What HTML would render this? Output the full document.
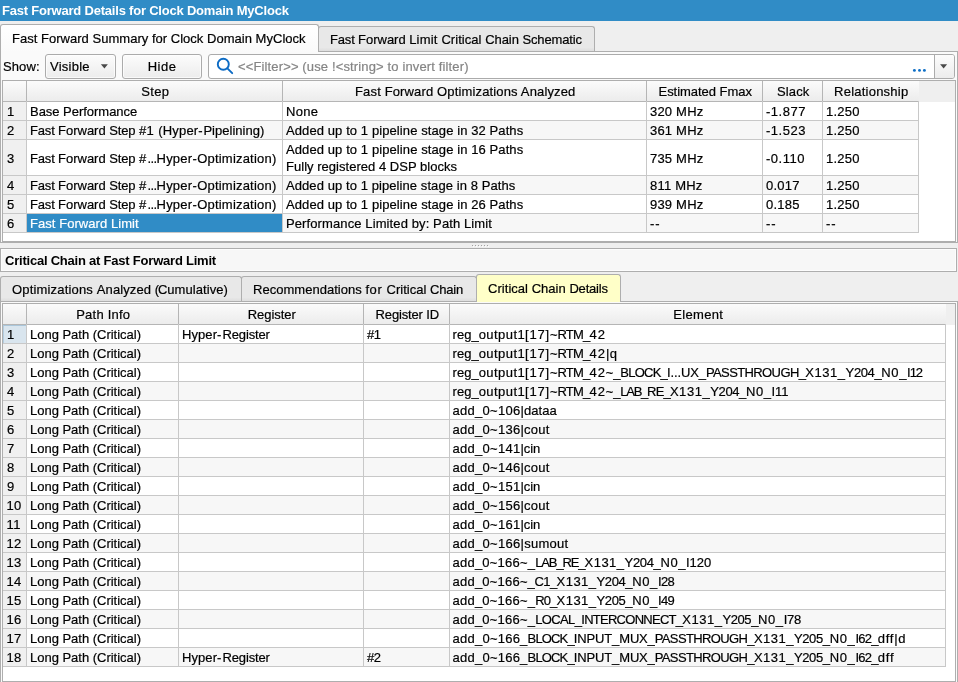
<!DOCTYPE html>
<html lang="en"><head><meta charset="utf-8"><title>Fast Forward Details for Clock Domain MyClock</title>
<style>
html,body{margin:0;padding:0}
body{width:958px;height:682px;overflow:hidden;background:#efefef;font-family:"Liberation Sans","DejaVu Sans",sans-serif;font-size:13px;color:#000;position:relative}
div,span{box-sizing:border-box}
#root{position:absolute;left:0;top:0;width:958px;height:682px;will-change:transform}
.a{position:absolute;white-space:nowrap;overflow:hidden}
.t{position:absolute;white-space:nowrap;line-height:16px;height:16px;-webkit-text-stroke:0.2px}
.c{text-align:center}
.hl{position:absolute;height:1px;background:#c8c8c8}
.vl{position:absolute;width:1px;background:#c8c8c8}
.hd{position:absolute;background:linear-gradient(#fbfbfb,#ececec)}
</style></head><body><div id="root">

<div class="a" style="left:0px;top:0px;width:958px;height:21px;background:#308cc6"></div>
<div class="t" style="left:2px;top:3px;letter-spacing:-0.211px;color:#fff;font-weight:bold;-webkit-text-stroke:0">Fast Forward Details for Clock Domain MyClock</div>
<div class="a" style="left:0px;top:51px;width:958px;height:192px;border:1px solid #aeaeae;background:#fafafa"></div>
<div class="a" style="left:318px;top:26px;width:277px;height:25px;border:1px solid #aeaeae;border-bottom:none;border-radius:3px 3px 0 0;background:linear-gradient(#e8e8e8 0,#e8e8e8 85%,#dedede 100%)"></div>
<div class="t" style="left:330px;top:32px;white-space:pre;"><span style="letter-spacing:-0.161px">Fast </span><span style="letter-spacing:-0.025px">Forward </span><span style="letter-spacing:0.19px">Limit </span><span style="letter-spacing:0.051px">Critical </span><span style="letter-spacing:-0.063px">Chain </span><span style="letter-spacing:-0.134px">Schematic</span></div>
<div class="a" style="left:0px;top:24px;width:319px;height:28px;border:1px solid #aeaeae;border-bottom:none;border-radius:3px 3px 0 0;background:linear-gradient(#fff,#fafafa)"></div>
<div class="t" style="left:12px;top:31px;letter-spacing:0.023px;">Fast Forward Summary for Clock Domain MyClock</div>
<div class="t" style="left:3px;top:59px;letter-spacing:0.1px;">Show:</div>
<div class="a" style="left:45px;top:54px;width:71px;height:25px;border:1px solid #ababab;border-radius:3px;background:linear-gradient(#fcfcfc,#ececec);box-shadow:inset 0 0 0 1px rgba(255,255,255,.7)"></div>
<div class="t" style="left:50px;top:59px;letter-spacing:0.25px;">Visible</div>
<svg class="a" style="left:100px;top:63px" width="10" height="7" viewBox="0 0 10 7"><path d="M0.9 1.25h7L4.4 5.4z" fill="#484848"/></svg>
<div class="a" style="left:122px;top:54px;width:80px;height:25px;border:1px solid #ababab;border-radius:3px;background:linear-gradient(#fcfcfc,#ececec);box-shadow:inset 0 0 0 1px rgba(255,255,255,.7)"></div>
<div class="t c" style="left:122px;top:59px;width:80px;padding-left:0px;letter-spacing:0.5px;">Hide</div>
<div class="a" style="left:208px;top:54px;width:747px;height:25px;border:1px solid #ababab;border-radius:3px;background:#fff"></div>
<svg class="a" style="left:213px;top:54px" width="24" height="24" viewBox="0 0 24 24"><circle cx="10.3" cy="10.3" r="5.5" fill="none" stroke="#0c6bc4" stroke-width="1.9"/><path d="M14.4 14.4L19.2 19.2" stroke="#0c6bc4" stroke-width="1.9" stroke-linecap="round"/></svg>
<div class="t" style="left:238px;top:59px;letter-spacing:0.137px;color:#858585">&lt;&lt;Filter&gt;&gt; (use !&lt;string&gt; to invert filter)</div>
<svg class="a" style="left:910px;top:66px" width="20" height="8" viewBox="0 0 20 8"><circle cx="4.4" cy="4.4" r="1.45" fill="#0f6fc6"/><circle cx="9.5" cy="4.4" r="1.45" fill="#0f6fc6"/><circle cx="14.4" cy="4.4" r="1.45" fill="#0f6fc6"/></svg>
<div class="a" style="left:934px;top:55px;width:20px;height:23px;border-left:1px solid #ababab;background:linear-gradient(#fcfcfc,#ececec);border-radius:0 2px 2px 0"></div>
<svg class="a" style="left:939px;top:63px" width="10" height="7" viewBox="0 0 10 7"><path d="M1.1 1.25h7L4.6 5.4z" fill="#484848"/></svg>
<div class="a" style="left:2px;top:80px;width:954px;height:162px;border:1px solid #aeaeae;background:#fff"></div>
<div class="a" style="left:3px;top:81px;width:916px;height:20px;background:linear-gradient(#fbfbfb,#ececec)"></div>
<div class="a" style="left:919px;top:81px;width:36px;height:21px;background:#efefef"></div>
<div class="t c" style="left:27px;top:84px;width:255px;padding-left:1.5px;letter-spacing:0.267px;">Step</div>
<div class="t c" style="left:283px;top:84px;width:363px;padding-left:1.5px;letter-spacing:0.147px;">Fast Forward Optimizations Analyzed</div>
<div class="t c" style="left:647px;top:84px;width:115px;padding-left:1.5px;letter-spacing:-0.031px;">Estimated Fmax</div>
<div class="t c" style="left:763px;top:84px;width:59px;padding-left:1.5px;letter-spacing:0.15px;">Slack</div>
<div class="t c" style="left:823px;top:84px;width:95px;padding-left:1.5px;letter-spacing:0.227px;">Relationship</div>
<div class="a" style="left:3px;top:102px;width:23px;height:18px;background:#f0f0f0"></div>
<div class="t" style="left:7px;top:104px;">1</div>
<div class="t" style="left:30px;top:104px;letter-spacing:-0.027px;">Base Performance</div>
<div class="t" style="left:286px;top:104px;letter-spacing:0.3px;">None</div>
<div class="t" style="left:650px;top:104px;letter-spacing:0.2px;">320 MHz</div>
<div class="t" style="left:766px;top:104px;letter-spacing:0.5px;">-1.877</div>
<div class="t" style="left:826px;top:104px;letter-spacing:0.25px;">1.250</div>
<div class="a" style="left:27px;top:121px;width:891px;height:18px;background:#f7f7f7"></div>
<div class="a" style="left:3px;top:121px;width:23px;height:18px;background:#f0f0f0"></div>
<div class="t" style="left:7px;top:123px;">2</div>
<div class="t" style="left:30px;top:123px;white-space:pre;"><span style="letter-spacing:-0.181px">Fast </span><span style="letter-spacing:0.0px">Forward </span><span style="letter-spacing:-0.152px">Step </span><span style="letter-spacing:0.466px">#</span><span style="letter-spacing:0.378px">1 </span><span style="letter-spacing:0.256px">(</span><span style="letter-spacing:0.163px">Hyper</span><span style="letter-spacing:0.756px">-</span><span style="letter-spacing:0.027px">Pipelining)</span></div>
<div class="t" style="left:286px;top:123px;letter-spacing:0.095px;">Added up to 1 pipeline stage in 32 Paths</div>
<div class="t" style="left:650px;top:123px;letter-spacing:0.2px;">361 MHz</div>
<div class="t" style="left:766px;top:123px;letter-spacing:0.5px;">-1.523</div>
<div class="t" style="left:826px;top:123px;letter-spacing:0.25px;">1.250</div>
<div class="a" style="left:3px;top:140px;width:23px;height:35px;background:#f0f0f0"></div>
<div class="t" style="left:7px;top:151px;">3</div>
<div class="t" style="left:30px;top:151px;white-space:pre;"><span style="letter-spacing:-0.181px">Fast </span><span style="letter-spacing:0.0px">Forward </span><span style="letter-spacing:-0.152px">Step </span><span style="letter-spacing:1.266px">#</span><span style="letter-spacing:-0.581px">...</span><span style="letter-spacing:0.243px">Hyper</span><span style="letter-spacing:0.456px">-</span><span style="letter-spacing:0.202px">Optimization)</span></div>
<div class="t" style="left:286px;top:142px;letter-spacing:0.095px;">Added up to 1 pipeline stage in 16 Paths</div>
<div class="t" style="left:286px;top:159px;letter-spacing:0.029px;">Fully registered 4 DSP blocks</div>
<div class="t" style="left:650px;top:151px;letter-spacing:0.2px;">735 MHz</div>
<div class="t" style="left:766px;top:151px;letter-spacing:0.5px;">-0.110</div>
<div class="t" style="left:826px;top:151px;letter-spacing:0.25px;">1.250</div>
<div class="a" style="left:27px;top:176px;width:891px;height:18px;background:#f7f7f7"></div>
<div class="a" style="left:3px;top:176px;width:23px;height:18px;background:#f0f0f0"></div>
<div class="t" style="left:7px;top:178px;">4</div>
<div class="t" style="left:30px;top:178px;white-space:pre;"><span style="letter-spacing:-0.181px">Fast </span><span style="letter-spacing:0.0px">Forward </span><span style="letter-spacing:-0.152px">Step </span><span style="letter-spacing:1.266px">#</span><span style="letter-spacing:-0.581px">...</span><span style="letter-spacing:0.243px">Hyper</span><span style="letter-spacing:0.456px">-</span><span style="letter-spacing:0.202px">Optimization)</span></div>
<div class="t" style="left:286px;top:178px;letter-spacing:0.079px;">Added up to 1 pipeline stage in 8 Paths</div>
<div class="t" style="left:650px;top:178px;letter-spacing:0.2px;">811 MHz</div>
<div class="t" style="left:766px;top:178px;letter-spacing:0.25px;">0.017</div>
<div class="t" style="left:826px;top:178px;letter-spacing:0.25px;">1.250</div>
<div class="a" style="left:3px;top:195px;width:23px;height:18px;background:#f0f0f0"></div>
<div class="t" style="left:7px;top:197px;">5</div>
<div class="t" style="left:30px;top:197px;white-space:pre;"><span style="letter-spacing:-0.181px">Fast </span><span style="letter-spacing:0.0px">Forward </span><span style="letter-spacing:-0.152px">Step </span><span style="letter-spacing:1.266px">#</span><span style="letter-spacing:-0.581px">...</span><span style="letter-spacing:0.243px">Hyper</span><span style="letter-spacing:0.456px">-</span><span style="letter-spacing:0.202px">Optimization)</span></div>
<div class="t" style="left:286px;top:197px;letter-spacing:0.095px;">Added up to 1 pipeline stage in 26 Paths</div>
<div class="t" style="left:650px;top:197px;letter-spacing:0.2px;">939 MHz</div>
<div class="t" style="left:766px;top:197px;letter-spacing:0.25px;">0.185</div>
<div class="t" style="left:826px;top:197px;letter-spacing:0.25px;">1.250</div>
<div class="a" style="left:27px;top:214px;width:891px;height:18px;background:#f7f7f7"></div>
<div class="a" style="left:3px;top:214px;width:23px;height:18px;background:#f0f0f0"></div>
<div class="t" style="left:7px;top:216px;">6</div>
<div class="a" style="left:27px;top:214px;width:255px;height:18px;background:#308cc6"></div>
<div class="t" style="left:30px;top:216px;letter-spacing:0.059px;color:#fff">Fast Forward Limit</div>
<div class="t" style="left:286px;top:216px;letter-spacing:0.109px;">Performance Limited by: Path Limit</div>
<div class="t" style="left:650px;top:216px;letter-spacing:0.9px;">--</div>
<div class="t" style="left:766px;top:216px;letter-spacing:0.9px;">--</div>
<div class="t" style="left:826px;top:216px;letter-spacing:0.9px;">--</div>
<div class="hl" style="left:3px;top:101px;width:916px;background:#b5b5b5"></div>
<div class="hl" style="left:3px;top:120px;width:916px;background:#c8c8c8"></div>
<div class="hl" style="left:3px;top:139px;width:916px;background:#c8c8c8"></div>
<div class="hl" style="left:3px;top:175px;width:916px;background:#c8c8c8"></div>
<div class="hl" style="left:3px;top:194px;width:916px;background:#c8c8c8"></div>
<div class="hl" style="left:3px;top:213px;width:916px;background:#c8c8c8"></div>
<div class="hl" style="left:3px;top:232px;width:916px;background:#c8c8c8"></div>
<div class="vl" style="left:26px;top:81px;height:20px;background:#b5b5b5"></div>
<div class="vl" style="left:26px;top:101px;height:132px"></div>
<div class="vl" style="left:282px;top:81px;height:20px;background:#b5b5b5"></div>
<div class="vl" style="left:282px;top:101px;height:132px"></div>
<div class="vl" style="left:646px;top:81px;height:20px;background:#b5b5b5"></div>
<div class="vl" style="left:646px;top:101px;height:132px"></div>
<div class="vl" style="left:762px;top:81px;height:20px;background:#b5b5b5"></div>
<div class="vl" style="left:762px;top:101px;height:132px"></div>
<div class="vl" style="left:822px;top:81px;height:20px;background:#b5b5b5"></div>
<div class="vl" style="left:822px;top:101px;height:132px"></div>
<div class="vl" style="left:918px;top:101px;height:132px"></div>
<div class="a" style="left:473px;top:246px;width:1px;height:1px;background:#fff"></div>
<div class="a" style="left:472px;top:245px;width:1px;height:1px;background:#a3a3a3"></div>
<div class="a" style="left:476px;top:246px;width:1px;height:1px;background:#fff"></div>
<div class="a" style="left:475px;top:245px;width:1px;height:1px;background:#a3a3a3"></div>
<div class="a" style="left:479px;top:246px;width:1px;height:1px;background:#fff"></div>
<div class="a" style="left:478px;top:245px;width:1px;height:1px;background:#a3a3a3"></div>
<div class="a" style="left:482px;top:246px;width:1px;height:1px;background:#fff"></div>
<div class="a" style="left:481px;top:245px;width:1px;height:1px;background:#a3a3a3"></div>
<div class="a" style="left:485px;top:246px;width:1px;height:1px;background:#fff"></div>
<div class="a" style="left:484px;top:245px;width:1px;height:1px;background:#a3a3a3"></div>
<div class="a" style="left:488px;top:246px;width:1px;height:1px;background:#fff"></div>
<div class="a" style="left:487px;top:245px;width:1px;height:1px;background:#a3a3a3"></div>
<div class="a" style="left:0px;top:248px;width:957px;height:24px;border:1px solid #aeaeae;background:#f7f7f7;box-shadow:inset 0 0 0 1px #fdfdfd"></div>
<div class="t" style="left:5px;top:253px;letter-spacing:-0.22px;font-weight:bold;-webkit-text-stroke:0">Critical Chain at Fast Forward Limit</div>
<div class="a" style="left:0px;top:301px;width:958px;height:382px;border:1px solid #aeaeae;background:#fafafa"></div>
<div class="a" style="left:0px;top:276px;width:242px;height:25px;border:1px solid #aeaeae;border-bottom:none;border-radius:3px 3px 0 0;background:linear-gradient(#e8e8e8 0,#e8e8e8 85%,#dedede 100%)"></div>
<div class="t" style="left:12px;top:282px;white-space:pre;"><span style="letter-spacing:0.173px">Optimizations </span><span style="letter-spacing:0.101px">Analyzed </span><span style="letter-spacing:-1.244px">(</span><span style="letter-spacing:0.058px">Cumulative)</span></div>
<div class="a" style="left:241px;top:276px;width:236px;height:25px;border:1px solid #aeaeae;border-bottom:none;border-radius:3px 3px 0 0;background:linear-gradient(#e8e8e8 0,#e8e8e8 85%,#dedede 100%)"></div>
<div class="t" style="left:253px;top:282px;white-space:pre;"><span style="letter-spacing:0.025px">Recommendations </span><span style="letter-spacing:0.576px">for </span><span style="letter-spacing:0.028px">Critical </span><span style="letter-spacing:-0.194px">Chain</span></div>
<div class="a" style="left:476px;top:274px;width:145px;height:28px;border:1px solid #aeaeae;border-bottom:none;border-radius:3px 3px 0 0;background:#ffffc8"></div>
<div class="t" style="left:488px;top:281px;white-space:pre;"><span style="letter-spacing:0.04px">Critical </span><span style="letter-spacing:0.02px">Chain </span><span style="letter-spacing:-0.193px">Details</span></div>
<div class="a" style="left:2px;top:303px;width:954px;height:379px;border:1px solid #aeaeae;background:#fff"></div>
<div class="a" style="left:3px;top:304px;width:943px;height:20px;background:linear-gradient(#fbfbfb,#ececec)"></div>
<div class="a" style="left:946px;top:304px;width:9px;height:21px;background:#efefef"></div>
<div class="t c" style="left:27px;top:307px;width:151px;padding-left:1.5px;letter-spacing:0.238px;">Path Info</div>
<div class="t c" style="left:179px;top:307px;width:184px;padding-left:1.5px;letter-spacing:-0.043px;">Register</div>
<div class="t c" style="left:364px;top:307px;width:85px;padding-left:1.5px;letter-spacing:-0.15px;">Register ID</div>
<div class="t c" style="left:450px;top:307px;width:495px;padding-left:1.5px;letter-spacing:0.35px;">Element</div>
<div class="a" style="left:3px;top:325px;width:23px;height:18px;background:#d9e5ee;border-top:1px solid #aac6da;border-left:1px solid #b4cee1"></div>
<div class="t" style="left:7px;top:327px;">1</div>
<div class="t" style="left:30px;top:327px;letter-spacing:-0.016px;">Long Path (Critical)</div>
<div class="t" style="left:182px;top:327px;white-space:pre;"><span style="letter-spacing:0.082px">Hyper</span><span style="letter-spacing:1.056px">-</span><span style="letter-spacing:-0.14px">Register</span></div>
<div class="t" style="left:367px;top:327px;letter-spacing:-0.4px;">#1</div>
<div class="t" style="left:452.6px;top:327px"><span style="letter-spacing:0.017px">reg_</span><span style="letter-spacing:0.432px">output1</span><span style="letter-spacing:0.778px">[17]</span><span style="letter-spacing:-0.094px">~</span><span style="letter-spacing:-0.764px">RTM_</span><span style="letter-spacing:0.916px">42</span></div>
<div class="a" style="left:27px;top:344px;width:918px;height:18px;background:#f7f7f7"></div>
<div class="a" style="left:3px;top:344px;width:23px;height:18px;background:#f0f0f0"></div>
<div class="t" style="left:7px;top:346px;">2</div>
<div class="t" style="left:30px;top:346px;letter-spacing:-0.016px;">Long Path (Critical)</div>
<div class="t" style="left:452.6px;top:346px"><span style="letter-spacing:0.017px">reg_</span><span style="letter-spacing:0.432px">output1</span><span style="letter-spacing:0.778px">[17]</span><span style="letter-spacing:-0.094px">~</span><span style="letter-spacing:-0.764px">RTM_</span><span style="letter-spacing:1.016px">42</span><span style="letter-spacing:0.445px">|q</span></div>
<div class="a" style="left:3px;top:363px;width:23px;height:18px;background:#f0f0f0"></div>
<div class="t" style="left:7px;top:365px;">3</div>
<div class="t" style="left:30px;top:365px;letter-spacing:-0.016px;">Long Path (Critical)</div>
<div class="t" style="left:452.6px;top:365px"><span style="letter-spacing:0.017px">reg_</span><span style="letter-spacing:0.432px">output1</span><span style="letter-spacing:0.778px">[17]</span><span style="letter-spacing:-0.094px">~</span><span style="letter-spacing:-0.764px">RTM_</span><span style="letter-spacing:0.916px">42</span><span style="letter-spacing:-0.164px">~_</span><span style="letter-spacing:-0.752px">BLOCK_</span><span style="letter-spacing:-0.138px">I...</span><span style="letter-spacing:-0.132px">UX_</span><span style="letter-spacing:-0.606px">PASSTHROUGH_</span><span style="letter-spacing:0.541px">X131_</span><span style="letter-spacing:-0.379px">Y204_</span><span style="letter-spacing:0.614px">N0_</span><span style="letter-spacing:-0.993px">I12</span></div>
<div class="a" style="left:27px;top:382px;width:918px;height:18px;background:#f7f7f7"></div>
<div class="a" style="left:3px;top:382px;width:23px;height:18px;background:#f0f0f0"></div>
<div class="t" style="left:7px;top:384px;">4</div>
<div class="t" style="left:30px;top:384px;letter-spacing:-0.016px;">Long Path (Critical)</div>
<div class="t" style="left:452.6px;top:384px"><span style="letter-spacing:0.017px">reg_</span><span style="letter-spacing:0.432px">output1</span><span style="letter-spacing:0.778px">[17]</span><span style="letter-spacing:-0.094px">~</span><span style="letter-spacing:-0.764px">RTM_</span><span style="letter-spacing:0.916px">42</span><span style="letter-spacing:-0.164px">~_</span><span style="letter-spacing:-1.253px">LAB_</span><span style="letter-spacing:-0.832px">RE_</span><span style="letter-spacing:0.561px">X131_</span><span style="letter-spacing:-0.399px">Y204_</span><span style="letter-spacing:0.614px">N0_</span><span style="letter-spacing:-0.103px">I11</span></div>
<div class="a" style="left:3px;top:401px;width:23px;height:18px;background:#f0f0f0"></div>
<div class="t" style="left:7px;top:403px;">5</div>
<div class="t" style="left:30px;top:403px;letter-spacing:-0.016px;">Long Path (Critical)</div>
<div class="t" style="left:452.6px;top:403px"><span style="letter-spacing:0.274px">add_0~106</span><span style="letter-spacing:0.046px">|dataa</span></div>
<div class="a" style="left:27px;top:420px;width:918px;height:18px;background:#f7f7f7"></div>
<div class="a" style="left:3px;top:420px;width:23px;height:18px;background:#f0f0f0"></div>
<div class="t" style="left:7px;top:422px;">6</div>
<div class="t" style="left:30px;top:422px;letter-spacing:-0.016px;">Long Path (Critical)</div>
<div class="t" style="left:452.6px;top:422px"><span style="letter-spacing:0.274px">add_0~136</span><span style="letter-spacing:0.209px">|cout</span></div>
<div class="a" style="left:3px;top:439px;width:23px;height:18px;background:#f0f0f0"></div>
<div class="t" style="left:7px;top:441px;">7</div>
<div class="t" style="left:30px;top:441px;letter-spacing:-0.016px;">Long Path (Critical)</div>
<div class="t" style="left:452.6px;top:441px"><span style="letter-spacing:0.274px">add_0~141</span><span style="letter-spacing:-0.1px">|cin</span></div>
<div class="a" style="left:27px;top:458px;width:918px;height:18px;background:#f7f7f7"></div>
<div class="a" style="left:3px;top:458px;width:23px;height:18px;background:#f0f0f0"></div>
<div class="t" style="left:7px;top:460px;">8</div>
<div class="t" style="left:30px;top:460px;letter-spacing:-0.016px;">Long Path (Critical)</div>
<div class="t" style="left:452.6px;top:460px"><span style="letter-spacing:0.274px">add_0~146</span><span style="letter-spacing:0.209px">|cout</span></div>
<div class="a" style="left:3px;top:477px;width:23px;height:18px;background:#f0f0f0"></div>
<div class="t" style="left:7px;top:479px;">9</div>
<div class="t" style="left:30px;top:479px;letter-spacing:-0.016px;">Long Path (Critical)</div>
<div class="t" style="left:452.6px;top:479px"><span style="letter-spacing:0.274px">add_0~151</span><span style="letter-spacing:-0.1px">|cin</span></div>
<div class="a" style="left:27px;top:496px;width:918px;height:18px;background:#f7f7f7"></div>
<div class="a" style="left:3px;top:496px;width:23px;height:18px;background:#f0f0f0"></div>
<div class="t" style="left:6.4px;top:498px;letter-spacing:0.5px">10</div>
<div class="t" style="left:30px;top:498px;letter-spacing:-0.016px;">Long Path (Critical)</div>
<div class="t" style="left:452.6px;top:498px"><span style="letter-spacing:0.274px">add_0~156</span><span style="letter-spacing:0.209px">|cout</span></div>
<div class="a" style="left:3px;top:515px;width:23px;height:18px;background:#f0f0f0"></div>
<div class="t" style="left:6.4px;top:517px;letter-spacing:0.5px">11</div>
<div class="t" style="left:30px;top:517px;letter-spacing:-0.016px;">Long Path (Critical)</div>
<div class="t" style="left:452.6px;top:517px"><span style="letter-spacing:0.274px">add_0~161</span><span style="letter-spacing:-0.1px">|cin</span></div>
<div class="a" style="left:27px;top:534px;width:918px;height:18px;background:#f7f7f7"></div>
<div class="a" style="left:3px;top:534px;width:23px;height:18px;background:#f0f0f0"></div>
<div class="t" style="left:6.4px;top:536px;letter-spacing:0.5px">12</div>
<div class="t" style="left:30px;top:536px;letter-spacing:-0.016px;">Long Path (Critical)</div>
<div class="t" style="left:452.6px;top:536px"><span style="letter-spacing:0.274px">add_0~166</span><span style="letter-spacing:0.283px">|sumout</span></div>
<div class="a" style="left:3px;top:553px;width:23px;height:18px;background:#f0f0f0"></div>
<div class="t" style="left:6.4px;top:555px;letter-spacing:0.5px">13</div>
<div class="t" style="left:30px;top:555px;letter-spacing:-0.016px;">Long Path (Critical)</div>
<div class="t" style="left:452.6px;top:555px"><span style="letter-spacing:0.207px">add_0~166</span><span style="letter-spacing:0.236px">~_</span><span style="letter-spacing:-1.128px">LAB_</span><span style="letter-spacing:-1.099px">RE_</span><span style="letter-spacing:0.501px">X131_</span><span style="letter-spacing:-0.339px">Y204_</span><span style="letter-spacing:0.547px">N0_</span><span style="letter-spacing:-0.053px">I120</span></div>
<div class="a" style="left:27px;top:572px;width:918px;height:18px;background:#f7f7f7"></div>
<div class="a" style="left:3px;top:572px;width:23px;height:18px;background:#f0f0f0"></div>
<div class="t" style="left:6.4px;top:574px;letter-spacing:0.5px">14</div>
<div class="t" style="left:30px;top:574px;letter-spacing:-0.016px;">Long Path (Critical)</div>
<div class="t" style="left:452.6px;top:574px"><span style="letter-spacing:0.207px">add_0~166</span><span style="letter-spacing:-0.064px">~_</span><span style="letter-spacing:-0.653px">C1_</span><span style="letter-spacing:0.501px">X131_</span><span style="letter-spacing:-0.399px">Y204_</span><span style="letter-spacing:0.647px">N0_</span><span style="letter-spacing:-0.626px">I28</span></div>
<div class="a" style="left:3px;top:591px;width:23px;height:18px;background:#f0f0f0"></div>
<div class="t" style="left:6.4px;top:593px;letter-spacing:0.5px">15</div>
<div class="t" style="left:30px;top:593px;letter-spacing:-0.016px;">Long Path (Critical)</div>
<div class="t" style="left:452.6px;top:593px"><span style="letter-spacing:0.207px">add_0~166</span><span style="letter-spacing:0.236px">~_</span><span style="letter-spacing:-0.853px">R0_</span><span style="letter-spacing:0.501px">X131_</span><span style="letter-spacing:-0.399px">Y205_</span><span style="letter-spacing:0.647px">N0_</span><span style="letter-spacing:-0.626px">I49</span></div>
<div class="a" style="left:27px;top:610px;width:918px;height:18px;background:#f7f7f7"></div>
<div class="a" style="left:3px;top:610px;width:23px;height:18px;background:#f0f0f0"></div>
<div class="t" style="left:6.4px;top:612px;letter-spacing:0.5px">16</div>
<div class="t" style="left:30px;top:612px;letter-spacing:-0.016px;">Long Path (Critical)</div>
<div class="t" style="left:452.6px;top:612px"><span style="letter-spacing:0.207px">add_0~166</span><span style="letter-spacing:0.236px">~_</span><span style="letter-spacing:-0.629px">LOCAL_</span><span style="letter-spacing:-0.732px">INTERCONNECT_</span><span style="letter-spacing:0.501px">X131_</span><span style="letter-spacing:-0.399px">Y205_</span><span style="letter-spacing:0.614px">N0_</span><span style="letter-spacing:-0.293px">I78</span></div>
<div class="a" style="left:3px;top:629px;width:23px;height:18px;background:#f0f0f0"></div>
<div class="t" style="left:6.4px;top:631px;letter-spacing:0.5px">17</div>
<div class="t" style="left:30px;top:631px;letter-spacing:-0.016px;">Long Path (Critical)</div>
<div class="t" style="left:452.6px;top:631px"><span style="letter-spacing:0.233px">add_0~166_</span><span style="letter-spacing:-0.852px">BLOCK_</span><span style="letter-spacing:-0.139px">INPUT_</span><span style="letter-spacing:-0.156px">MUX_</span><span style="letter-spacing:-0.623px">PASSTHROUGH_</span><span style="letter-spacing:0.501px">X131_</span><span style="letter-spacing:-0.399px">Y205_</span><span style="letter-spacing:0.647px">N0_</span><span style="letter-spacing:-0.753px">I62_</span><span style="letter-spacing:0.734px">dff|d</span></div>
<div class="a" style="left:27px;top:648px;width:918px;height:18px;background:#f7f7f7"></div>
<div class="a" style="left:3px;top:648px;width:23px;height:18px;background:#f0f0f0"></div>
<div class="t" style="left:6.4px;top:650px;letter-spacing:0.5px">18</div>
<div class="t" style="left:30px;top:650px;letter-spacing:-0.016px;">Long Path (Critical)</div>
<div class="t" style="left:182px;top:650px;white-space:pre;"><span style="letter-spacing:0.082px">Hyper</span><span style="letter-spacing:1.056px">-</span><span style="letter-spacing:-0.14px">Register</span></div>
<div class="t" style="left:367px;top:650px;letter-spacing:-0.4px;">#2</div>
<div class="t" style="left:452.6px;top:650px"><span style="letter-spacing:0.233px">add_0~166_</span><span style="letter-spacing:-0.852px">BLOCK_</span><span style="letter-spacing:-0.139px">INPUT_</span><span style="letter-spacing:-0.156px">MUX_</span><span style="letter-spacing:-0.623px">PASSTHROUGH_</span><span style="letter-spacing:0.501px">X131_</span><span style="letter-spacing:-0.399px">Y205_</span><span style="letter-spacing:0.647px">N0_</span><span style="letter-spacing:-0.753px">I62_</span><span style="letter-spacing:0.827px">dff</span></div>
<div class="hl" style="left:3px;top:324px;width:943px;background:#b5b5b5"></div>
<div class="hl" style="left:3px;top:343px;width:943px;background:#c8c8c8"></div>
<div class="hl" style="left:3px;top:362px;width:943px;background:#c8c8c8"></div>
<div class="hl" style="left:3px;top:381px;width:943px;background:#c8c8c8"></div>
<div class="hl" style="left:3px;top:400px;width:943px;background:#c8c8c8"></div>
<div class="hl" style="left:3px;top:419px;width:943px;background:#c8c8c8"></div>
<div class="hl" style="left:3px;top:438px;width:943px;background:#c8c8c8"></div>
<div class="hl" style="left:3px;top:457px;width:943px;background:#c8c8c8"></div>
<div class="hl" style="left:3px;top:476px;width:943px;background:#c8c8c8"></div>
<div class="hl" style="left:3px;top:495px;width:943px;background:#c8c8c8"></div>
<div class="hl" style="left:3px;top:514px;width:943px;background:#c8c8c8"></div>
<div class="hl" style="left:3px;top:533px;width:943px;background:#c8c8c8"></div>
<div class="hl" style="left:3px;top:552px;width:943px;background:#c8c8c8"></div>
<div class="hl" style="left:3px;top:571px;width:943px;background:#c8c8c8"></div>
<div class="hl" style="left:3px;top:590px;width:943px;background:#c8c8c8"></div>
<div class="hl" style="left:3px;top:609px;width:943px;background:#c8c8c8"></div>
<div class="hl" style="left:3px;top:628px;width:943px;background:#c8c8c8"></div>
<div class="hl" style="left:3px;top:647px;width:943px;background:#c8c8c8"></div>
<div class="hl" style="left:3px;top:666px;width:943px;background:#c8c8c8"></div>
<div class="vl" style="left:26px;top:304px;height:20px;background:#b5b5b5"></div>
<div class="vl" style="left:26px;top:324px;height:343px"></div>
<div class="vl" style="left:178px;top:304px;height:20px;background:#b5b5b5"></div>
<div class="vl" style="left:178px;top:324px;height:343px"></div>
<div class="vl" style="left:363px;top:304px;height:20px;background:#b5b5b5"></div>
<div class="vl" style="left:363px;top:324px;height:343px"></div>
<div class="vl" style="left:449px;top:304px;height:20px;background:#b5b5b5"></div>
<div class="vl" style="left:449px;top:324px;height:343px"></div>
<div class="vl" style="left:945px;top:324px;height:343px"></div>
</div></body></html>
